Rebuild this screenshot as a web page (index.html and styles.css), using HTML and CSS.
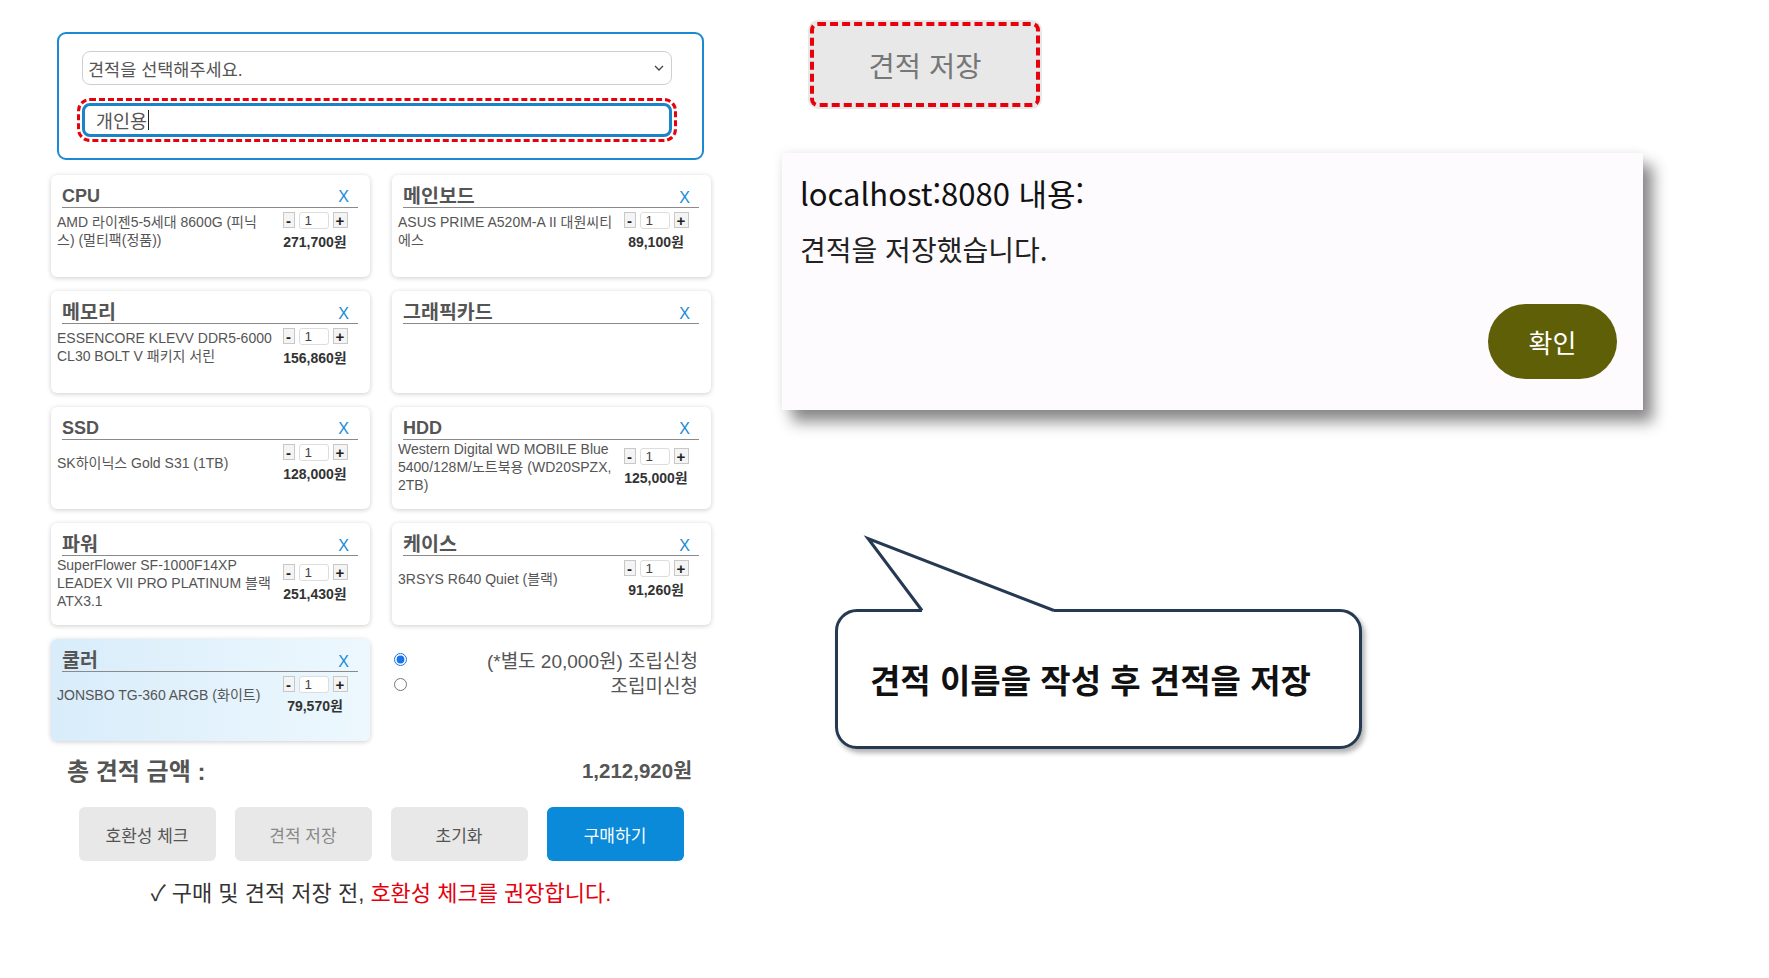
FILE: index.html
```html
<!DOCTYPE html>
<html lang="ko">
<head>
<meta charset="utf-8">
<title>견적</title>
<link rel="stylesheet" href="styles.css">
</head>
<body>
<div class="page">
  <main class="builder">
    <div class="picker">
      <div class="select">
        <span>견적을 선택해주세요.</span>
        <svg class="chev" width="10" height="6" viewBox="0 0 10 6"><path d="M1 1 L5 5 L9 1" fill="none" stroke="#444" stroke-width="1.3"/></svg>
      </div>
      <div class="name-input"><span>개인용</span><span class="caret"></span></div>
    </div>

    <div class="parts">
      <div class="card">
        <div class="card-head"><span class="card-title">CPU</span><span class="remove">X</span></div>
        <div class="card-body">
          <div class="desc">AMD 라이젠5-5세대 8600G (피닉스) (멀티팩(정품))</div>
          <div class="qty-col">
            <div class="qty"><span class="qbtn">-</span><span class="qinput">1</span><span class="qbtn plus">+</span></div>
            <div class="price">271,700원</div>
          </div>
        </div>
      </div>
      <div class="card">
        <div class="card-head"><span class="card-title ko">메인보드</span><span class="remove">X</span></div>
        <div class="card-body">
          <div class="desc">ASUS PRIME A520M-A II 대원씨티에스</div>
          <div class="qty-col">
            <div class="qty"><span class="qbtn">-</span><span class="qinput">1</span><span class="qbtn plus">+</span></div>
            <div class="price">89,100원</div>
          </div>
        </div>
      </div>
      <div class="card">
        <div class="card-head"><span class="card-title ko">메모리</span><span class="remove">X</span></div>
        <div class="card-body">
          <div class="desc">ESSENCORE KLEVV DDR5-6000 CL30 BOLT V 패키지 서린</div>
          <div class="qty-col">
            <div class="qty"><span class="qbtn">-</span><span class="qinput">1</span><span class="qbtn plus">+</span></div>
            <div class="price">156,860원</div>
          </div>
        </div>
      </div>
      <div class="card">
        <div class="card-head"><span class="card-title ko">그래픽카드</span><span class="remove">X</span></div>
        <div class="card-body"></div>
      </div>
      <div class="card">
        <div class="card-head"><span class="card-title">SSD</span><span class="remove">X</span></div>
        <div class="card-body">
          <div class="desc">SK하이닉스 Gold S31 (1TB)</div>
          <div class="qty-col">
            <div class="qty"><span class="qbtn">-</span><span class="qinput">1</span><span class="qbtn plus">+</span></div>
            <div class="price">128,000원</div>
          </div>
        </div>
      </div>
      <div class="card">
        <div class="card-head"><span class="card-title">HDD</span><span class="remove">X</span></div>
        <div class="card-body">
          <div class="desc">Western Digital WD MOBILE Blue 5400/128M/노트북용 (WD20SPZX, 2TB)</div>
          <div class="qty-col">
            <div class="qty"><span class="qbtn">-</span><span class="qinput">1</span><span class="qbtn plus">+</span></div>
            <div class="price">125,000원</div>
          </div>
        </div>
      </div>
      <div class="card">
        <div class="card-head"><span class="card-title ko">파워</span><span class="remove">X</span></div>
        <div class="card-body">
          <div class="desc">SuperFlower SF-1000F14XP LEADEX VII PRO PLATINUM 블랙 ATX3.1</div>
          <div class="qty-col">
            <div class="qty"><span class="qbtn">-</span><span class="qinput">1</span><span class="qbtn plus">+</span></div>
            <div class="price">251,430원</div>
          </div>
        </div>
      </div>
      <div class="card">
        <div class="card-head"><span class="card-title ko">케이스</span><span class="remove">X</span></div>
        <div class="card-body">
          <div class="desc">3RSYS R640 Quiet (블랙)</div>
          <div class="qty-col">
            <div class="qty"><span class="qbtn">-</span><span class="qinput">1</span><span class="qbtn plus">+</span></div>
            <div class="price">91,260원</div>
          </div>
        </div>
      </div>
      <div class="card selected">
        <div class="card-head"><span class="card-title ko">쿨러</span><span class="remove">X</span></div>
        <div class="card-body">
          <div class="desc">JONSBO TG-360 ARGB (화이트)</div>
          <div class="qty-col">
            <div class="qty"><span class="qbtn">-</span><span class="qinput">1</span><span class="qbtn plus">+</span></div>
            <div class="price">79,570원</div>
          </div>
        </div>
      </div>
      <div class="assembly">
        <label class="opt"><input type="radio" name="asm" checked><span>(*별도 20,000원) 조립신청</span></label>
        <label class="opt"><input type="radio" name="asm"><span>조립미신청</span></label>
      </div>
    </div>

    <div class="total"><span class="total-label">총 견적 금액 :</span><span class="total-amount">1,212,920원</span></div>

    <div class="actions">
      <div class="btn">호환성 체크</div>
      <div class="btn muted">견적 저장</div>
      <div class="btn">초기화</div>
      <div class="btn primary">구매하기</div>
    </div>

    <p class="note">✓ 구매 및 견적 저장 전, <span class="warn">호환성 체크를 권장합니다.</span></p>
  </main>

  <aside class="annot">
    <div class="save-callout">견적 저장</div>
    <div class="dialog">
      <div class="dlg-title">localhost:8080 내용:</div>
      <div class="dlg-msg">견적을 저장했습니다.</div>
      <div class="dlg-ok">확인</div>
    </div>
    <div class="bubble">
      <svg class="tail" width="230" height="80" viewBox="0 0 230 80">
        <polygon points="33,1.5 87,73.5 87,78 219,78 219,73.5" fill="#fff"/>
        <polyline points="87,73.5 33,1.5 219,73.5" fill="none" stroke="#253a52" stroke-width="3" stroke-linejoin="miter"/>
      </svg>
      <p>견적 이름을 작성 후 견적을 저장</p>
    </div>
  </aside>
</div>
</body>
</html>
```

FILE: styles.css
```css
body {
  margin: 0;
  background: #fff;
  font-family: "Liberation Sans", "Noto Sans CJK KR", sans-serif;
}

.page {
  display: flex;
  align-items: flex-start;
}

.builder {
  width: 660px;
  margin-left: 51px;
  padding-top: 32px;
  flex: none;
}

.picker {
  margin: 0 7px 0 6px;
  border: 2px solid #1b8ad3;
  border-radius: 9px;
  padding: 17px 30px 21px 23px;
  display: flex;
  flex-direction: column;
  gap: 18px;
}

.select {
  height: 34px;
  box-sizing: border-box;
  border: 1px solid #cfcfcf;
  border-radius: 8px;
  display: flex;
  align-items: center;
  justify-content: space-between;
  padding: 0 7px 0 5px;
  font-size: 17.5px;
  color: #555;
}

.name-input {
  height: 34px;
  box-sizing: border-box;
  border: 3px solid #1a84c8;
  border-radius: 8px;
  outline: 3px dashed #e8000b;
  outline-offset: 2px;
  padding-left: 11px;
  font-size: 18.5px;
  color: #555;
  display: flex;
  align-items: center;
}

.caret {
  display: inline-block;
  width: 1px;
  height: 20px;
  background: #222;
  margin-left: 1px;
}

.parts {
  display: grid;
  grid-template-columns: 319px 319px;
  column-gap: 22px;
  row-gap: 14px;
  margin-top: 15px;
}

.card {
  height: 102px;
  box-sizing: border-box;
  background: #fff;
  border-radius: 6px;
  box-shadow: 0 1px 5px rgba(0, 0, 0, 0.2);
  padding-top: 11px;
}

.card.selected {
  background: linear-gradient(90deg, #d8ecfa, #edf8fe);
}

.card-head {
  display: flex;
  justify-content: space-between;
  align-items: baseline;
  border-bottom: 1px solid #8a8a8a;
  margin: 0 12px 0 11px;
  padding-right: 9px;
  height: 21px;
  line-height: 21px;
}

.card-title {
  font-size: 18px;
  font-weight: bold;
  color: #555;
}

.card-title.ko {
  font-size: 19.5px;
}

.remove {
  font-size: 16px;
  color: #1a8ad4;
}

.card-body {
  display: flex;
  align-items: center;
  min-height: 46px;
  padding: 0 21px 0 6px;
}

.desc {
  width: 216.5px;
  flex: none;
  font-size: 14px;
  line-height: 18px;
  color: #555;
}

.qty-col {
  width: 68px;
  margin-left: auto;
  display: flex;
  flex-direction: column;
  align-items: center;
  gap: 5px;
}

.qty {
  display: flex;
  align-items: center;
  gap: 4px;
}

.qbtn {
  width: 12px;
  height: 16px;
  box-sizing: border-box;
  border: 1px solid #c8c8c8;
  background: #f4f4f4;
  font-size: 15px;
  font-weight: bold;
  color: #222;
  display: flex;
  align-items: center;
  justify-content: center;
}

.qbtn.plus {
  width: 15px;
}

.qinput {
  width: 30px;
  height: 17px;
  box-sizing: border-box;
  border: 1px solid #ddd;
  border-radius: 3px;
  background: #fff;
  font-size: 13.5px;
  line-height: 15px;
  padding-left: 5px;
  color: #444;
}

.price {
  font-size: 14px;
  font-weight: bold;
  line-height: 17px;
  color: #333;
}

.assembly {
  padding: 8px 13px 0 2px;
  font-size: 19px;
  color: #555;
}

.opt {
  display: flex;
  justify-content: space-between;
  align-items: center;
  height: 25px;
}

.opt input {
  margin: 0;
  width: 13px;
  height: 13px;
  accent-color: #1a73e8;
}

.total {
  display: flex;
  justify-content: space-between;
  align-items: center;
  margin-top: 13px;
  padding: 0 19px 0 16px;
  height: 30px;
  color: #555;
  font-weight: bold;
}

.total-label {
  font-size: 24px;
}

.total-amount {
  font-size: 20.5px;
}

.actions {
  display: flex;
  justify-content: center;
  gap: 19px;
  margin-top: 23px;
}

.btn {
  width: 137px;
  height: 54px;
  border-radius: 6px;
  background: #e8e8e8;
  color: #555;
  font-size: 17px;
  display: flex;
  align-items: center;
  justify-content: center;
}

.btn.muted {
  color: #888;
}

.btn.primary {
  background: #0a8ad8;
  color: #fff;
}

.note {
  margin: 18px 0 0;
  text-align: center;
  font-size: 22px;
  line-height: 30px;
  color: #333;
}

.warn {
  color: #e5000f;
}

.annot {
  margin-left: 71px;
  padding-top: 20px;
  display: flex;
  flex-direction: column;
  align-items: flex-start;
}

.save-callout {
  margin-left: 26px;
  width: 234px;
  height: 89px;
  background: #e8e8e8;
  outline: 4px dashed #e8000b;
  outline-offset: -6px;
  border-radius: 10px;
  font-size: 28.5px;
  color: #777;
  display: flex;
  align-items: center;
  justify-content: center;
}

.dialog {
  margin-top: 44px;
  width: 861px;
  height: 257px;
  box-sizing: border-box;
  background: #fdfbfd;
  box-shadow: 10px 12px 14px rgba(0, 0, 0, 0.45), 0 0 10px rgba(0, 0, 0, 0.08);
  padding: 20px 26px 31px 18px;
  font-family: "Noto Sans CJK KR", sans-serif;
  display: flex;
  flex-direction: column;
}

.dlg-title {
  font-size: 31px;
  line-height: 40px;
  color: #111;
}

.dlg-msg {
  font-size: 28px;
  line-height: 36px;
  color: #222;
  margin-top: 18px;
}

.dlg-ok {
  align-self: flex-end;
  margin-top: auto;
  width: 129px;
  height: 75px;
  border-radius: 38px;
  background: #5f5f08;
  color: #fff;
  font-size: 26px;
  display: flex;
  align-items: center;
  justify-content: center;
}

.bubble {
  position: relative;
  margin: 199px 0 0 53px;
  width: 527px;
  height: 140px;
  box-sizing: border-box;
  border: 3px solid #253a52;
  border-radius: 22px;
  background: #fff;
  box-shadow: 3px 4px 5px rgba(0, 0, 0, 0.3);
  display: flex;
  align-items: center;
  padding-left: 32px;
}

.tail {
  position: absolute;
  left: -3px;
  top: -75px;
  overflow: visible;
}

.bubble p {
  margin: 0;
  font-family: "Noto Sans CJK KR", sans-serif;
  font-weight: bold;
  font-size: 33px;
  color: #111;
}
```
